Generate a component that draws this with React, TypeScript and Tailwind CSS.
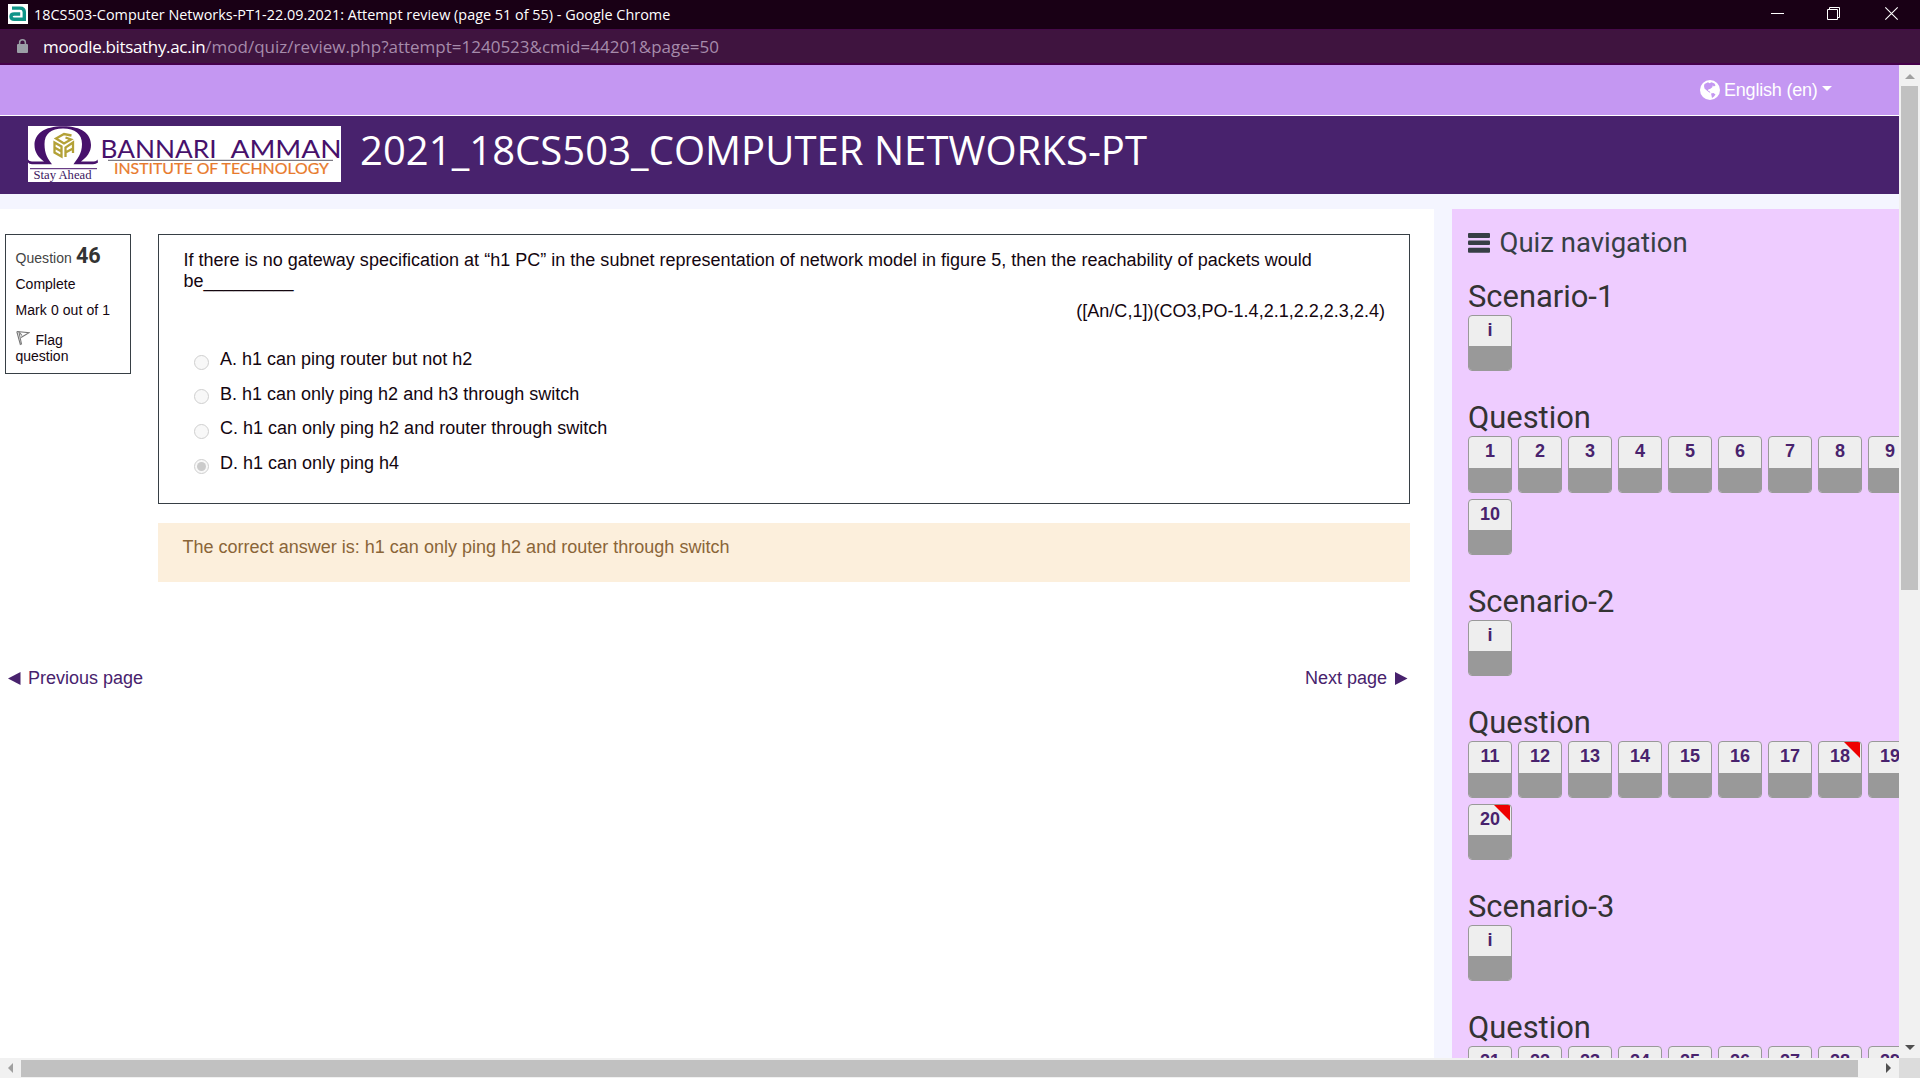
import React from "react";

type NavItem = { label: string; flagged?: boolean };

const range = (from: number, to: number, flagged: number[] = []): NavItem[] =>
  Array.from({ length: to - from + 1 }, (_, i) => ({
    label: String(from + i),
    flagged: flagged.includes(from + i),
  }));

const sections = [
  { n: 1, items: range(1, 10) },
  { n: 2, items: range(11, 20, [18, 20]) },
  { n: 3, items: range(21, 30) },
];

const options = [
  "A. h1 can ping router but not h2",
  "B. h1 can only ping h2 and h3 through switch",
  "C. h1 can only ping h2 and router through switch",
  "D. h1 can only ping h4",
];

function TitleBar() {
  return (
    <div className="flex h-[29px] shrink-0 items-center bg-[#190015] pl-[8px] text-white">
      <svg width="20" height="20" viewBox="0 0 20 20" className="-mt-px shrink-0">
        <rect width="20" height="20" fill="#fff" />
        <path
          d="M4 4.1H12Q16.300 4.1 16.300 8V15.300H6.200Q3 15.300 3 12.600Q3 10 6.200 10H12.200"
          fill="none"
          stroke="#0f9488"
          strokeWidth="3.400"
        />
      </svg>
      <div className="ml-[6px] whitespace-nowrap font-['Open_Sans',sans-serif] text-[14.4px] leading-[29px] tracking-[0.01px]">
        18CS503-Computer Networks-PT1-22.09.2021: Attempt review (page 51 of 55) - Google Chrome
      </div>
      <svg width="150" height="29" viewBox="0 0 150 29" className="ml-auto" fill="none" stroke="#fff">
        <path d="M1 13.5H14" />
        <path d="M57.5 9.5H67.5V19.5H57.5ZM59.5 9.5V7.5H69.5V17.5H67.5" />
        <path d="M115.3 7.3L127.7 19.7M127.7 7.3L115.3 19.7" strokeWidth="1.1" />
      </svg>
    </div>
  );
}

function AddressBar() {
  return (
    <div className="flex h-[36px] shrink-0 items-center border-b-2 border-t border-b-[#45004a] border-t-[#450a48] bg-[#3f143f] pl-[16px]">
      <svg width="13" height="15" viewBox="0 0 13 15" className="shrink-0">
        <rect x="1" y="5" width="11" height="9" rx="1" fill="#9b9fa6" />
        <path d="M3.6 6V3.7a2.9 2.9 0 0 1 5.8 0V6" fill="none" stroke="#9b9fa6" strokeWidth="1.5" />
      </svg>
      <div className="ml-[14px] whitespace-nowrap font-['Open_Sans',sans-serif] text-[17px] leading-[32px] text-[#a68bab]">
        <span className="tracking-[-0.34px] text-white">moodle.bitsathy.ac.in</span>
        /mod/quiz/review.php?attempt=1240523&amp;cmid=44201&amp;page=50
      </div>
    </div>
  );
}

function Logo() {
  return (
    <svg width="313" height="56" viewBox="0 0 313 56" className="shrink-0 bg-white">
      <path
        d="M0 33.5Q1 35.5 4 35.5H16C10 31 6.5 26 6.5 19C6.5 8 16 0.3 35 0.3C54 0.3 63 8 63 19C63 26 59 31 53 35.5H66Q68.500 35.500 69.500 33.500L70 36.500Q68 38.200 65 38.200H45.500C49 33 54 28 54 18C54 8 47 2.500 35 2.500C23 2.500 16.500 8 16.500 18C16.500 28 20 33 24 38.200H4Q1 38.200 0 36.500Z"
        fill="#47116b"
      />
      <g fill="none" stroke="#b3a137" strokeWidth="2.300">
        <path d="M43.500 9.500L36 8L28 12.500L36 17.500L43 13.500L37.500 11.500" />
        <path d="M26.500 16.500L33.500 20.500V30.500L26.500 26.500ZM26.500 21.500L33.500 25.500" />
        <path d="M37.500 31V21.500L45 16.500V27M37.500 26.500L45 22.500" />
      </g>
      <path d="M2 42.700H69" stroke="#47116b" strokeWidth="1" />
      <text x="5.500" y="52.500" textLength="58" lengthAdjust="spacingAndGlyphs" fontFamily="'Liberation Serif', serif" fontSize="12" fill="#3c1560">
        Stay Ahead
      </text>
      <g fontFamily="Lato, sans-serif" fontSize="25" fill="#47116b">
        <text x="72.500" y="32" textLength="116" lengthAdjust="spacingAndGlyphs">
          BANNARI
        </text>
        <text x="202.500" y="32" textLength="111" lengthAdjust="spacingAndGlyphs">
          AMMAN
        </text>
      </g>
      <path d="M80 34.300H305" stroke="#5d5a66" strokeWidth="1" />
      <text x="86" y="47.500" textLength="215" lengthAdjust="spacingAndGlyphs" fontFamily="Lato, sans-serif" fontSize="15.500" fill="#e87a2c" stroke="#e87a2c" strokeWidth="0.200">
        INSTITUTE OF TECHNOLOGY
      </text>
    </svg>
  );
}

function LanguageBar() {
  return (
    <div className="flex h-[50px] shrink-0 items-center bg-[#c497f2] pl-[1700px] text-white">
      <svg width="20" height="20" viewBox="0 0 20 20" className="shrink-0">
        <circle cx="10" cy="10" r="10" fill="#fff" />
        <path
          d="M4.500 4L8 2.300L9.500 3.200L11.500 2.300L14.500 3.500L15.500 5.500L13.800 6.500L12.800 5.300L12.300 7.200L10 9L8.500 9.300L8 10.800L9.500 11.300L10.500 13L9 12.300L6.500 10.300L4.500 8.500L4 6ZM11 13.500L13.500 13L15.500 14.500L14 16.500L12 18L11.500 15.500Z"
          fill="#c497f2"
        />
      </svg>
      <span className="ml-[4px] text-[18px] leading-[21px] tracking-[-0.2px]">English (en)</span>
      <span className="-mt-[3px] ml-[4px] border-x-[5px] border-t-[5px] border-x-transparent border-t-white" />
    </div>
  );
}

function QuestionInfo() {
  return (
    <div className="h-[140px] w-[126px] border border-[#373f45] pl-[9.500px] text-[14px] text-[#14060f]">
      <div className="mt-[9px] flex h-[24px] items-baseline leading-[24px]">
        <span className="text-[#444] tracking-[0.05px]">Question</span>
        <span className="ml-[4px] font-[Roboto,sans-serif] text-[21.600px] font-bold text-[#333]">46</span>
      </div>
      <div className="mt-[8px] leading-[16px]">Complete</div>
      <div className="mt-[10px] leading-[16px] tracking-[0.08px]">Mark 0 out of 1</div>
      <div className="mt-[14px] leading-[16px]">
        <svg width="14" height="16" viewBox="0 0 14 16" className="-mt-[7px] mr-[6px] inline-block align-middle" fill="none" stroke="#777" strokeWidth="1.100">
          <path d="M0.800 1.500L4.500 15M2.800 1.500L5.600 14.500" />
          <path d="M1 1.500L13 2.800L5 7.500M3.500 2.500L6 5.500" />
        </svg>
        Flag
        <br />
        question
      </div>
    </div>
  );
}

function QuestionCard() {
  return (
    <div className="h-[270px] border border-[#373f45] pl-[24.500px] pr-[24px] pt-[15px] text-[#14060f]">
      <p>
        <span className="tracking-[0.012px]">
          If there is no gateway specification at “h1 PC” in the subnet representation of network model in figure 5, then the reachability of packets would
        </span>
        <br />
        be_________
      </p>
      <p className="mt-[9px] text-right tracking-[0.015px]">([An/C,1])(CO3,PO-1.4,2.1,2.2,2.3,2.4)</p>
      <div className="mt-[27px]">
        {options.map((text, i) => (
          <div key={text} className="flex h-[34.700px] items-start pl-[10px]">
            <span className="mt-[5.500px] flex size-[15px] shrink-0 items-center justify-center rounded-full border border-[#cfcfcf] bg-[#f8f8f8]">
              {i === 3 && <span className="size-[9px] rounded-full bg-[#cbcbcb]" />}
            </span>
            <span className="ml-[11.500px]">{text}</span>
          </div>
        ))}
      </div>
    </div>
  );
}

function QuizButton({ label, flagged }: NavItem) {
  return (
    <div className="relative h-[56.400px] w-[44px] shrink-0 overflow-hidden rounded-[4px] border border-[#999] bg-[#eee] text-center text-[18px] font-bold leading-[29px] text-[#48226d]">
      {label}
      <div className="absolute inset-x-0 bottom-0 h-[24px] bg-[#999]" />
      {flagged && (
        <svg width="16" height="16" className="absolute right-[1px] top-0">
          <path d="M0 0H16V16Z" fill="#ee0000" />
        </svg>
      )}
    </div>
  );
}

function SectionTitle({ children }: { children: React.ReactNode }) {
  return (
    <h3 className="h-[36px] font-[Roboto,sans-serif] text-[30.900px] font-normal leading-[36px] text-[#333]">{children}</h3>
  );
}

function Sidebar() {
  return (
    <aside className="h-[849px] w-[447px] shrink-0 overflow-hidden bg-[#eeccff] pl-[16px] pt-[16px]">
      <div className="flex h-[35px] items-center font-[Roboto,sans-serif] text-[27.500px] leading-[35px] text-[#373f45]">
        <svg width="22" height="20" viewBox="0 0 22 20" className="mr-[9.500px]" fill="#373f45">
          <rect width="22" height="5" rx="1" />
          <rect y="7.500" width="22" height="4.500" rx="1" />
          <rect y="14.700" width="22" height="5" rx="1" />
        </svg>
        Quiz navigation
      </div>
      <div className="mt-[19px]">
        {sections.map((s) => (
          <div key={s.n} className="mb-[28.850px]">
            <SectionTitle>Scenario-{s.n}</SectionTitle>
            <QuizButton label="i" />
            <div className="h-[28.950px]" />
            <SectionTitle>Question</SectionTitle>
            <div className="flex w-[450px] flex-wrap gap-x-[6px] gap-y-[6.100px]">
              {s.items.map((item) => (
                <QuizButton key={item.label} {...item} />
              ))}
            </div>
          </div>
        ))}
      </div>
    </aside>
  );
}

function VerticalScrollbar() {
  return (
    <div className="flex w-[21px] shrink-0 flex-col items-center bg-[#f1f1f1]">
      <span className="mt-[9px] border-x-[5px] border-b-[5px] border-x-transparent border-b-[#a0a0a0]" />
      <span className="mt-[7px] h-[504px] w-[17px] bg-[#c1c1c1]" />
      <span className="mb-[8px] mt-auto border-x-[5px] border-t-[5px] border-x-transparent border-t-[#505050]" />
    </div>
  );
}

function HorizontalScrollbar() {
  return (
    <div className="flex h-[20px] shrink-0 bg-[#f1f1f1]">
      <div className="flex w-[1899px] items-center">
        <span className="ml-[8px] border-y-[5px] border-r-[5px] border-y-transparent border-r-[#a0a0a0]" />
        <span className="ml-[8px] h-[17px] w-[1837px] bg-[#c1c1c1]" />
        <span className="ml-[28px] border-y-[5px] border-l-[5px] border-y-transparent border-l-[#505050]" />
      </div>
      <div className="w-[21px] bg-[#dcdcdc]" />
    </div>
  );
}

export default function App() {
  return (
    <div className="flex h-[1078px] w-[1920px] flex-col overflow-hidden bg-white font-['Liberation_Sans',sans-serif] text-[18px] leading-[21px]">
      <TitleBar />
      <AddressBar />
      <div className="flex h-[993px] shrink-0">
        <div className="flex w-[1899px] shrink-0 flex-col overflow-hidden bg-[#f4f5ff]">
          <LanguageBar />
          <header className="flex h-[79px] shrink-0 border-t border-white bg-[#48226d] pl-[28px] pt-[10px]">
            <Logo />
            <h1 className="-mt-px ml-[19px] whitespace-nowrap font-['Open_Sans',sans-serif] text-[40px] leading-[50px] tracking-[0.050px] text-white">
              2021_18CS503_COMPUTER NETWORKS-PT
            </h1>
          </header>
          <div className="mt-[15px] flex">
            <main className="h-[849px] w-[1434px] shrink-0 bg-white pl-[5px] pt-[25px]">
              <div className="flex gap-[27px]">
                <QuestionInfo />
                <div className="w-[1252px]">
                  <QuestionCard />
                  <div className="mt-[19px] h-[59px] bg-[#fcefdc] pl-[24.500px] pt-[14px] tracking-[0.010px] text-[#8a6538]">
                    The correct answer is: h1 can only ping h2 and router through switch
                  </div>
                </div>
              </div>
              <div className="mt-[86px] flex w-[1405px] items-center justify-between pl-[3px] pr-[2px] text-[#48226d]">
                <span className="flex items-center">
                  <svg width="13" height="13" className="-mt-px mr-[7px]">
                    <path d="M0 6.500L12.500 0V13Z" fill="#48226d" />
                  </svg>
                  Previous page
                </span>
                <span className="flex items-center">
                  Next page
                  <svg width="13" height="13" className="-mt-px ml-[8px]">
                    <path d="M12.500 6.500L0 0V13Z" fill="#48226d" />
                  </svg>
                </span>
              </div>
            </main>
            <div className="w-[18px] shrink-0" />
            <Sidebar />
          </div>
        </div>
        <VerticalScrollbar />
      </div>
      <HorizontalScrollbar />
    </div>
  );
}
